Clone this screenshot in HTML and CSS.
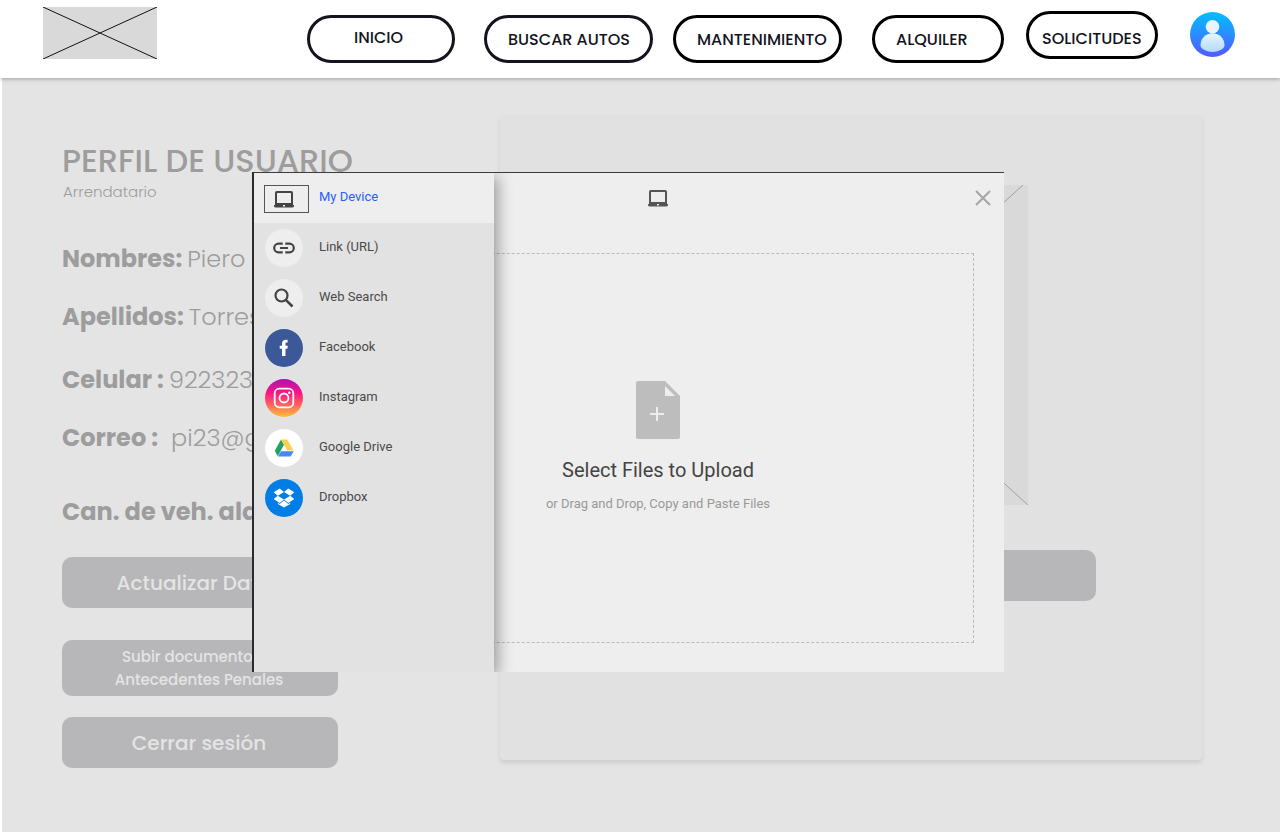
FILE: index.html
```html
<!DOCTYPE html>
<html lang="es">
<head>
<meta charset="utf-8">
<title>Perfil de usuario</title>
<meta name="viewport" content="width=device-width, initial-scale=1">
<link rel="stylesheet" href="styles.css">
</head>
<body>
<header class="topbar">
  <svg class="logo" viewBox="0 0 114 52" role="img" aria-label="Logo"><rect width="114" height="52" fill="#d9d9d9"/><path d="M0 0 114 52M0 52 114 0" stroke="#111" fill="none"/></svg>
  <nav class="nav">
    <a class="pill pill-home" href="#">INICIO</a>
    <a class="pill pill-search" href="#">BUSCAR AUTOS</a>
    <a class="pill pill-service" href="#">MANTENIMIENTO</a>
    <a class="pill pill-rent" href="#">ALQUILER</a>
    <a class="pill pill-requests" href="#">SOLICITUDES</a>
  </nav>
  <button class="avatar" type="button" aria-label="Cuenta">
    <svg viewBox="0 0 45 45">
      <defs>
        <linearGradient id="av" x1="0" y1="0" x2="0" y2="1"><stop offset="0" stop-color="#00c0ff"/><stop offset="1" stop-color="#5558ff"/></linearGradient>
        <linearGradient id="bd" x1="0" y1="0" x2="0" y2="1"><stop offset="0" stop-color="#e9f5fe"/><stop offset="1" stop-color="#b1dafc"/></linearGradient>
      </defs>
      <circle cx="22.500" cy="22.500" r="22.500" fill="url(#av)"/>
      <path d="M10.500 33.500C10.500 26.500 15.500 21.300 22.500 21.300S34.500 26.500 34.500 33.500C34.500 37 28 40 22.500 40S10.500 37 10.500 33.500Z" fill="url(#bd)"/>
      <circle cx="22.500" cy="14.700" r="6.800" fill="#e9f5fe"/>
    </svg>
  </button>
</header>

<main class="page">
  <section class="profile">
    <h1 class="title">PERFIL DE USUARIO</h1>
    <p class="role">Arrendatario</p>
    <dl class="facts">
      <div class="fact"><dt>Nombres:</dt><dd>Piero</dd></div>
      <div class="fact"><dt>Apellidos:</dt><dd>Torres</dd></div>
      <div class="fact fact-phone"><dt>Celular :</dt><dd>922323</dd></div>
      <div class="fact fact-mail"><dt>Correo :</dt><dd>pi23@g</dd></div>
      <div class="fact fact-cars"><dt>Can. de veh. alq</dt></div>
    </dl>
    <div class="actions">
      <button class="btn" type="button">Actualizar Datos</button>
      <button class="btn btn-docs" type="button">Subir documento de<br>Antecedentes Penales</button>
      <button class="btn" type="button">Cerrar sesión</button>
    </div>
  </section>

  <section class="card">
    <svg class="photo" viewBox="0 0 354 320" preserveAspectRatio="none" role="img" aria-label="Foto"><rect width="354" height="320" fill="#d9d9d9"/><path d="M0 0 354 320M0 316 349 0" stroke="#a0a0a0" fill="none"/></svg>
    <button class="btn btn-photo" type="button" aria-label="Foto"></button>
  </section>
</main>

<div class="dialog" role="dialog" aria-label="Select Files to Upload">
  <div class="picker">
    <div class="picker-head">
      <svg class="device" viewBox="0 0 20 17"><path d="M2 1.800Q2 1 2.800 1H17.200Q18 1 18 1.800V13H2Z" fill="none" stroke="#555" stroke-width="2"/><path d="M0 14H9V15.500H11V14H20V15Q20 16.500 18 16.500H2Q0 16.500 0 15Z" fill="#555"/></svg>
      <button class="close" type="button" aria-label="Close"><svg viewBox="0 0 16 16"><path d="M1 1 15 15M15 1 1 15" stroke="#a5a5a5" stroke-width="2" fill="none"/></svg></button>
    </div>
    <div class="drop">
      <svg class="file" viewBox="0 0 44 58"><path d="M2 0H29L44 15V56Q44 58 42 58H2Q0 58 0 56V2Q0 0 2 0Z" fill="#bdbdbd"/><path d="M29 5V15H39Z" fill="#eee"/><path d="M21 26V40M14 33H28" stroke="#eee" stroke-width="2"/></svg>
      <h2 class="drop-title">Select Files to Upload</h2>
      <p class="drop-hint">or Drag and Drop, Copy and Paste Files</p>
    </div>
  </div>
  <div class="sources">
    <button class="source source-active" type="button">
      <span class="icon icon-focus"><svg class="glyph-device" viewBox="0 0 20 17"><path d="M2 1.800Q2 1 2.800 1H17.200Q18 1 18 1.800V13H2Z" fill="none" stroke="#444" stroke-width="2"/><path d="M0 14H9V15.500H11V14H20V15Q20 16.500 18 16.500H2Q0 16.500 0 15Z" fill="#444"/></svg></span>
      <span>My Device</span>
    </button>
    <button class="source" type="button">
      <svg class="icon" viewBox="0 0 38 38"><circle cx="19" cy="19" r="19" fill="#eee"/><path d="M17.700 14.700H13.500A4.300 4.300 0 0 0 13.500 23.300H17.700M20.300 14.700H24.500A4.300 4.300 0 0 1 24.500 23.300H20.300M15 19H23" fill="none" stroke="#444" stroke-width="2.200"/></svg>
      <span>Link (URL)</span>
    </button>
    <button class="source" type="button">
      <svg class="icon" viewBox="0 0 38 38"><circle cx="19" cy="19" r="19" fill="#eee"/><circle cx="16.500" cy="16.500" r="6" fill="none" stroke="#444" stroke-width="2.200"/><path d="M20.800 20.800 27.500 27.500" stroke="#444" stroke-width="2.600"/></svg>
      <span>Web Search</span>
    </button>
    <button class="source" type="button">
      <svg class="icon" viewBox="0 0 38 38"><circle cx="19" cy="19" r="19" fill="#3b5998"/><path d="M17 27V19.700H14.700V16.700H17V14.600C17 12 18.600 10.700 20.700 10.700H22.600V13.600H21.400C20.700 13.600 20.500 14.200 20.500 14.900V16.700H22.800L22.400 19.700H20.500V27Z" fill="#fff"/></svg>
      <span>Facebook</span>
    </button>
    <button class="source" type="button">
      <svg class="icon" viewBox="0 0 38 38"><defs><linearGradient id="ig" x1="0" y1="0" x2="0" y2="1"><stop offset="0" stop-color="#a913b0"/><stop offset=".35" stop-color="#fb1288"/><stop offset=".65" stop-color="#ff5b62"/><stop offset="1" stop-color="#ffc038"/></linearGradient></defs><circle cx="19" cy="19" r="19" fill="url(#ig)"/><rect x="9.700" y="9.700" width="18.600" height="18.600" rx="4.500" fill="none" stroke="#fff" stroke-width="1.800"/><circle cx="19" cy="19" r="4.500" fill="none" stroke="#fff" stroke-width="1.800"/><circle cx="24.300" cy="13.800" r="1.300" fill="#fff"/></svg>
      <span>Instagram</span>
    </button>
    <button class="source" type="button">
      <svg class="icon" viewBox="0 0 38 38"><circle cx="19" cy="19" r="19" fill="#fff"/><path d="M16 10.500 19 15.800 12.800 27.300 9.800 21.800Z" fill="#1da362"/><path d="M16 10.500H22.200L28.600 21.500H22.400Z" fill="#ffd04b"/><path d="M16 22.200H28.700L25.600 27.500H13Z" fill="#4688f4"/></svg>
      <span>Google Drive</span>
    </button>
    <button class="source" type="button">
      <svg class="icon" viewBox="0 0 38 38"><circle cx="19" cy="19" r="19" fill="#007ee5"/><path d="M14.700 9.500 19 13 12.800 16.700 8.700 13.300ZM23.300 9.500 29.300 13.300 25.200 16.700 19 13ZM8.700 20 12.800 16.700 19 20.500 14.700 24ZM25.200 16.700 29.300 20 23.300 24 19 20.500ZM19 21.400 23.300 24.900 25.200 23.700V25L19 28.500 12.900 25V23.700L14.700 24.900Z" fill="#fff"/></svg>
      <span>Dropbox</span>
    </button>
  </div>
</div>
</body>
</html>
```
FILE: styles.css
```css
* { box-sizing: border-box; }
body {
  margin: 0;
  min-height: 100vh;
  display: flex;
  flex-direction: column;
  position: relative;
  background: #fff;
  font-family: Poppins, Inter, "Open Sans", sans-serif;
}
h1, h2, p, dl, dd { margin: 0; }
button { font: inherit; border: 0; padding: 0; background: none; }
svg { display: block; }

.topbar {
  display: flex;
  align-items: flex-start;
  height: 78px;
  padding: 7px 45px 0 43px;
  background: #fff;
  box-shadow: 0 1px 4px rgba(0, 0, 0, .3);
  z-index: 1;
}
.logo { width: 114px; height: 52px; }
.nav { display: flex; margin-left: auto; padding-top: 4px; }
.pill {
  height: 48px;
  margin-top: 4px;
  border: 3px solid #000;
  border-radius: 24px;
  padding-left: 21px;
  font-size: 16px;
  line-height: 44px;
  font-weight: 500;
  color: #14141e;
  text-decoration: none;
  white-space: nowrap;
}
.pill-home { width: 148px; padding-left: 44px; line-height: 40px; margin-right: 29px; border-color: #14141e; }
.pill-search { width: 169px; margin-right: 20px; border-color: #14141e; }
.pill-service { width: 169px; margin-right: 30px; }
.pill-rent { width: 132px; margin-right: 22px; }
.pill-requests { width: 132px; padding-left: 13px; margin-top: 0; line-height: 50px; }
.avatar { width: 45px; margin: 5px 0 0 32px; }

.page {
  flex: 1;
  display: flex;
  align-items: flex-start;
  justify-content: space-between;
  margin-left: 2px;
  padding: 37px 78px 64px 60px;
  background: #e4e4e4;
  color: #9d9d9e;
}
.profile { width: 320px; padding-top: 22px; }
.title { font-size: 32px; line-height: 48px; font-weight: 500; white-space: nowrap; }
.role { padding-left: 1px; font-size: 15px; line-height: 14px; font-weight: 300; }
.facts { padding-top: 42px; font-size: 24px; line-height: 36px; }
.fact { display: flex; gap: 5px; margin-bottom: 22px; white-space: nowrap; }
.fact dt { font-weight: 700; }
.fact dd { font-weight: 300; }
.fact-phone { padding-top: 5px; }
.fact-mail { gap: 13px; }
.fact-cars { padding-top: 16px; margin-bottom: 0; }
.actions { display: flex; flex-direction: column; gap: 21px; width: 276px; padding-top: 27px; }
.btn {
  min-height: 51px;
  padding-right: 2px;
  border-radius: 10px;
  background: #b7b7b9;
  color: #e4e4e4;
  font-size: 20px;
  font-weight: 500;
}
.btn-docs { margin-top: 11px; min-height: 56px; font-size: 15px; line-height: 23px; }
.card {
  flex: 0 1 702px;
  min-height: 645px;
  display: flex;
  flex-direction: column;
  align-items: center;
  gap: 45px;
  padding-top: 70px;
  border-radius: 4px;
  background: #e1e1e1;
  box-shadow: 0 3px 4px rgba(0, 0, 0, .1);
}
.photo { width: 354px; height: 320px; }
.btn-photo { width: 490px; }

.dialog {
  position: absolute;
  top: 172px;
  left: 252px;
  width: 752px;
  height: 500px;
  z-index: 2;
  border-top: 1px solid #3c3c3c;
  border-left: 2px solid #2b2b2b;
  background: #eee;
  font-family: Roboto, sans-serif;
}
.picker { display: flex; flex-direction: column; height: 100%; padding: 0 30px 29px 88px; }
.picker-head { display: flex; justify-content: center; height: 80px; padding-top: 17px; position: relative; }
.device { width: 20px; height: 17px; }
.close { position: absolute; top: 17px; right: -17px; width: 16px; height: 16px; }
.drop {
  flex: 1;
  display: flex;
  flex-direction: column;
  align-items: center;
  padding-top: 127px;
  border: 1px dashed #bbb;
}
.file { width: 44px; height: 58px; }
.drop-title { margin-top: 19px; font-size: 20px; line-height: 24px; font-weight: 400; color: #444; }
.drop-hint { margin-top: 14px; font-size: 13px; line-height: 16px; color: #999; }
.sources {
  position: absolute;
  top: 0;
  left: 0;
  bottom: 0;
  width: 240px;
  background: #e2e2e2;
  box-shadow: 4px 4px 14px rgba(0, 0, 0, .35);
  clip-path: inset(0 -20px 0 0);
}
.source {
  display: flex;
  align-items: center;
  gap: 16px;
  width: 100%;
  height: 50px;
  padding-left: 11px;
  font-size: 13px;
  line-height: 16px;
  color: #4a4a4a;
}
.source span:last-child { padding-bottom: 3px; }
.source-active { background: #eee; color: #285efa; gap: 10px; padding-left: 10px; }
.icon { width: 38px; height: 38px; }
.icon-focus { display: flex; align-items: center; width: 45px; height: 28px; margin-top: 2px; padding-left: 9px; border: 1px solid #555; }
.glyph-device { width: 20px; height: 17px; }
```
